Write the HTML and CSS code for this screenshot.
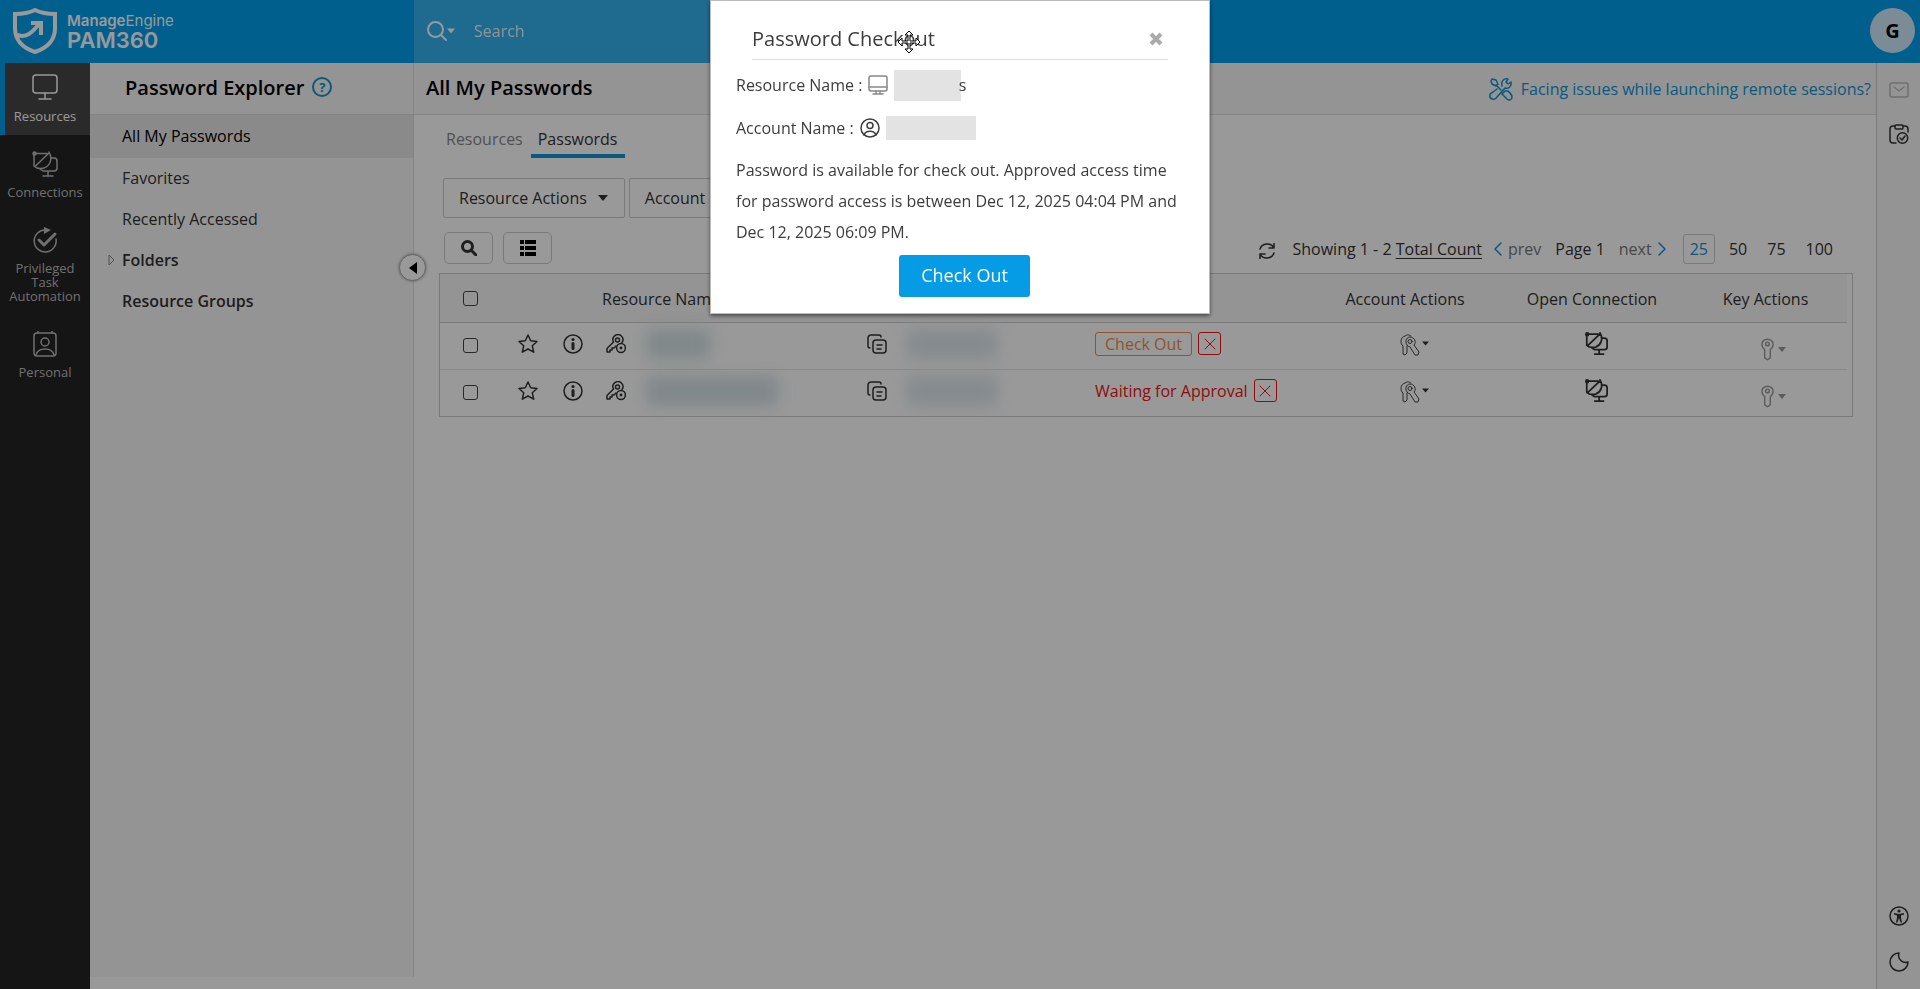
FILE: index.html
```html
<!DOCTYPE html>
<html lang="en">
<head>
    <meta charset="UTF-8">
    <meta name="viewport" content="width=device-width, initial-scale=1.0">
    <title>ManageEngine PAM360</title>
    <link rel="stylesheet" href="styles.css">
</head>
<body>

    <!-- shared icons -->
    <svg class="sprite" aria-hidden="true">
        <symbol id="i-monitor" viewBox="0 0 26 26">
            <rect x="1" y="1" width="24" height="18" rx="3"/>
            <path d="M13 19v5M7 25h12"/>
        </symbol>
        <symbol id="i-connect" viewBox="0 0 26 26">
            <path d="M2 2.500h13M17 1c4 7 1 14-5 16-4 1-8 0-10-2V3M3 15.500L17 2"/>
            <circle cx="2.500" cy="2.500" r="1.500" fill="currentColor"/>
            <path d="M19 7h3a3 3 0 0 1 3 3v7a3 3 0 0 1-3 3H11l-3-2M16 20v4M11 25h10"/>
        </symbol>
        <symbol id="i-task" viewBox="0 0 26 26">
            <path d="M14 3a11 11 0 1 0 10 9"/>
            <path d="M12 0l7 3-7 4z" fill="currentColor" stroke="none"/>
            <path d="M7 13l5 5L23 7" stroke-width="3"/>
        </symbol>
        <symbol id="i-personal" viewBox="0 0 26 26">
            <rect x="2" y="2" width="22" height="23" rx="3"/>
            <circle cx="13" cy="11" r="4"/>
            <path d="M4 24c2-8 16-8 18 0M6 0v2M20 0v2"/>
        </symbol>
        <symbol id="i-star" viewBox="0 0 20 20">
            <path d="M10 1l2.700 5.800 6.300.7-4.700 4.300 1.400 6.400L10 15l-5.700 3.200 1.400-6.400L1 7.500l6.300-.7z"/>
        </symbol>
        <symbol id="i-info" viewBox="0 0 20 20">
            <circle cx="10" cy="10" r="9"/>
            <path d="M10 9.500v5" stroke-width="3"/>
            <circle cx="10" cy="5.500" r="1.600" fill="currentColor" stroke="none"/>
        </symbol>
        <symbol id="i-keyview" viewBox="0 0 20 20">
            <path d="M16 8.500a5 5 0 1 0-8.500-.5L1 14.500V18h3v-2h2v-2h2l2-2"/>
            <circle cx="11.500" cy="6" r="2"/>
            <circle cx="15" cy="14" r="4.400"/>
            <circle cx="15" cy="14" r=".7" fill="currentColor"/>
        </symbol>
        <symbol id="i-copy" viewBox="0 0 20 20">
            <rect x="6" y="6" width="13" height="13" rx="3"/>
            <path d="M3 14a2 2 0 0 1-2-2V4a3 3 0 0 1 3-3h8a2 2 0 0 1 2 2M10 11h5M10 15h4"/>
        </symbol>
        <symbol id="i-keys" viewBox="0 0 22 22">
            <path d="M5 2C0 3 0 10 3 12v8l2 1 2-2v-7M5 2c2-2 5-1 6 0"/>
            <path d="M8 12C4 9 6 3 10 3s7 5 4 8l5 7-1 3h-3l-5-8z"/>
            <circle cx="10" cy="7.500" r="2"/>
        </symbol>
        <symbol id="i-key" viewBox="0 0 14 24">
            <path d="M4 12C1 10 1 8 1 6a6 5 0 0 1 12 0c0 2 0 4-3 6v9l-3 2-3-2z"/>
            <circle cx="7" cy="6" r="2"/>
        </symbol>
        <symbol id="i-cross" viewBox="0 0 12 12">
            <path d="M1 1l10 10M11 1L1 11"/>
        </symbol>
        <symbol id="i-caret" viewBox="0 0 10 6">
            <path d="M0 0h10L5 6z" fill="currentColor" stroke="none"/>
        </symbol>
    </svg>

    <header class="topbar">
        <a class="brand" href="#">
            <svg class="shield" viewBox="0 0 44 46">
                <path d="M22 2C16 5 9 6 2 6v14c0 12 8 20 20 24 12-4 20-12 20-24V6C35 6 28 5 22 2z"/>
                <path d="M4 27c9 3 14-1 23-12M18 15h10v12" />
            </svg>
            <span class="brand-text">
                <span class="brand-company"><b>Manage</b>Engine</span>
                <span class="brand-product">PAM360</span>
            </span>
        </a>
        <div class="search">
            <button class="search-type" aria-label="Search type">
                <svg class="icon" width="20" height="20" viewBox="0 0 20 20"><circle cx="8.500" cy="8.500" r="7.500"/><path d="M14 14l5 5"/></svg>
                <svg class="caret" width="8" height="6"><use href="#i-caret"/></svg>
            </button>
            <input type="text" placeholder="Search" aria-label="Search">
        </div>
        <button class="avatar">G</button>
    </header>

    <div class="layout">
        <nav class="nav">
            <a class="nav-item active" href="#"><svg class="icon"><use href="#i-monitor"/></svg>Resources</a>
            <a class="nav-item" href="#"><svg class="icon"><use href="#i-connect"/></svg>Connections</a>
            <a class="nav-item" href="#"><svg class="icon"><use href="#i-task"/></svg>Privileged Task Automation</a>
            <a class="nav-item" href="#"><svg class="icon"><use href="#i-personal"/></svg>Personal</a>
        </nav>

        <aside class="explorer">
            <div class="explorer-title">
                <h2>Password Explorer</h2>
                <a class="help" href="#" aria-label="Help">?</a>
            </div>
            <ul>
                <li><a class="selected" href="#">All My Passwords</a></li>
                <li><a href="#">Favorites</a></li>
                <li><a href="#">Recently Accessed</a></li>
                <li><a class="group" href="#"><svg class="expand" width="7" height="12" viewBox="0 0 7 12"><path d="M1 1l5 5-5 5z"/></svg>Folders</a></li>
                <li><a class="group" href="#">Resource Groups</a></li>
            </ul>
            <button class="collapse" aria-label="Collapse"><svg width="8" height="12" viewBox="0 0 8 12"><path d="M8 0v12L0 6z"/></svg></button>
        </aside>

        <main class="main">
            <div class="page-head">
                <h2>All My Passwords</h2>
                <a class="issues" href="#">
                    <svg class="icon" width="24" height="24" viewBox="0 0 24 24"><path d="M7 8l5 5M3 2l4 1 2 4-2 2-4-2-1-3zM13 9c-1-4 1-8 6-7l-2 3 2 2 3-2c1 5-3 7-6 6L8 20c-2 4-8 2-7-2 0-2 2-2 3-3l4-3M16 14c4-1 7 4 7 6 0 3-3 4-5 2l-5-5z"/></svg>
                    Facing issues while launching remote sessions?
                </a>
            </div>

            <div class="content">
                <div class="tabs">
                    <a href="#">Resources</a>
                    <a class="current" href="#">Passwords</a>
                </div>

                <div class="actions">
                    <button>Resource Actions <svg width="10" height="6"><use href="#i-caret"/></svg></button>
                    <button>Account <svg width="10" height="6"><use href="#i-caret"/></svg></button>
                </div>

                <div class="tools">
                    <button class="tool" aria-label="Find"><svg class="icon" width="16" height="16" viewBox="0 0 16 16"><circle cx="6.500" cy="6.500" r="5"/><path d="M10 10l5 5"/></svg></button>
                    <button class="tool" aria-label="Columns"><svg width="16" height="16" viewBox="0 0 16 16"><path d="M0 0h4v4H0zM5 0h11v4H5zM0 6h4v4H0zM5 6h11v4H5zM0 12h4v4H0zM5 12h11v4H5z"/></svg></button>
                    <div class="pager">
                        <button class="refresh" aria-label="Refresh"><svg class="icon" width="18" height="16" viewBox="0 0 18 16"><path d="M2 6c2-6 11-7 14-1M16 0v5h-5M16 10c-2 6-11 7-14 1M2 16v-5h5"/></svg></button>
                        <span>Showing 1 - 2 <a class="total" href="#">Total Count</a></span>
                        <a class="step prev" href="#"><svg class="icon" width="8" height="14" viewBox="0 0 8 14"><path d="M7 1L1 7l6 6"/></svg>prev</a>
                        <span class="page">Page 1</span>
                        <a class="step next" href="#">next<svg class="icon" width="8" height="14" viewBox="0 0 8 14"><path d="M1 1l6 6-6 6"/></svg></a>
                        <a class="size current" href="#">25</a>
                        <a class="size" href="#">50</a>
                        <a class="size" href="#">75</a>
                        <a class="size" href="#">100</a>
                    </div>
                </div>

                <div class="grid">
                    <table>
                        <colgroup>
                            <col class="c-check"><col class="c-star"><col class="c-info"><col>
                            <col class="c-account"><col class="c-status"><col class="c-actions"><col class="c-open"><col class="c-key">
                        </colgroup>
                        <thead>
                            <tr>
                                <th class="mid"><input type="checkbox" aria-label="Select all"></th>
                                <th></th>
                                <th></th>
                                <th>Resource Name</th>
                                <th>User Account</th>
                                <th>Password</th>
                                <th class="mid">Account Actions</th>
                                <th class="mid">Open Connection</th>
                                <th class="mid">Key Actions</th>
                            </tr>
                        </thead>
                        <tbody>
                            <tr>
                                <td class="mid pick"><input type="checkbox" aria-label="Select row 1"></td>
                                <td class="mid"><svg class="icon"><use href="#i-star"/></svg></td>
                                <td class="mid"><svg class="icon"><use href="#i-info"/></svg></td>
                                <td><div class="cell name"><svg class="icon"><use href="#i-keyview"/></svg><span class="smudge teal"></span></div></td>
                                <td><div class="cell"><svg class="icon"><use href="#i-copy"/></svg><span class="smudge"></span></div></td>
                                <td><div class="status"><button class="checkout">Check Out</button><button class="deny" aria-label="Cancel"><svg class="icon"><use href="#i-cross"/></svg></button></div></td>
                                <td class="mid"><button class="drop dark" aria-label="Account actions"><svg class="icon keys"><use href="#i-keys"/></svg><svg class="caret" width="7" height="5"><use href="#i-caret"/></svg></button></td>
                                <td class="mid connect"><svg class="icon open"><use href="#i-connect"/></svg></td>
                                <td class="mid"><button class="drop faded" aria-label="Key actions"><svg class="icon key"><use href="#i-key"/></svg><svg class="caret" width="8" height="5"><use href="#i-caret"/></svg></button></td>
                            </tr>
                            <tr>
                                <td class="mid pick"><input type="checkbox" aria-label="Select row 2"></td>
                                <td class="mid"><svg class="icon"><use href="#i-star"/></svg></td>
                                <td class="mid"><svg class="icon"><use href="#i-info"/></svg></td>
                                <td><div class="cell name"><svg class="icon"><use href="#i-keyview"/></svg><span class="smudge wide"></span></div></td>
                                <td><div class="cell"><svg class="icon"><use href="#i-copy"/></svg><span class="smudge"></span></div></td>
                                <td><div class="status"><span class="waiting">Waiting for Approval</span><button class="deny" aria-label="Cancel"><svg class="icon"><use href="#i-cross"/></svg></button></div></td>
                                <td class="mid"><button class="drop dark" aria-label="Account actions"><svg class="icon keys"><use href="#i-keys"/></svg><svg class="caret" width="7" height="5"><use href="#i-caret"/></svg></button></td>
                                <td class="mid connect"><svg class="icon open"><use href="#i-connect"/></svg></td>
                                <td class="mid"><button class="drop faded" aria-label="Key actions"><svg class="icon key"><use href="#i-key"/></svg><svg class="caret" width="8" height="5"><use href="#i-caret"/></svg></button></td>
                            </tr>
                        </tbody>
                    </table>
                </div>
            </div>
        </main>

        <div class="rail">
            <button class="mail" aria-label="Messages"><svg class="icon" width="20" height="16" viewBox="0 0 20 16"><rect x="1" y="1" width="18" height="14" rx="2"/><path d="M5 5l5 4 5-4"/></svg></button>
            <button aria-label="Requests"><svg class="icon" width="20" height="20" viewBox="0 0 20 20"><path d="M7 19H4a3 3 0 0 1-3-3V5a3 3 0 0 1 3-3h2M14 2h2a3 3 0 0 1 3 3v3"/><rect x="6" y="1" width="8" height="4" rx="1"/><circle cx="13.500" cy="14" r="5.200"/><path d="M11 14l2 2 3-4"/></svg></button>
            <button class="bottom" aria-label="Accessibility"><svg class="icon" width="20" height="20" viewBox="0 0 20 20"><circle cx="10" cy="10" r="9"/><circle cx="10" cy="5" r="1.600" fill="currentColor" stroke="none"/><path d="M5 7l5 1 5-1v1.500l-3 1v2l1 5h-1.500L10 12l-1.500 4.500H7l1-5v-2l-3-1z" fill="currentColor" stroke="none"/></svg></button>
            <button aria-label="Dark mode"><svg class="icon" width="20" height="20" viewBox="0 0 20 20"><path d="M10 1a9 9 0 1 0 9 9c-5 2-11-3-9-9z"/></svg></button>
        </div>
    </div>

    <div class="overlay">
        <div class="modal" role="dialog" aria-labelledby="modal-title">
            <div class="modal-head">
                <h3 id="modal-title">Password Checkout</h3>
                <svg class="move" width="24" height="24" viewBox="0 0 24 24"><path d="M12 1l4 4h-3v6h6V8l4 4-4 4v-3h-6v6h3l-4 4-4-4h3v-6H5v3l-4-4 4-4v3h6V5H8z"/></svg>
                <button class="close" aria-label="Close"><svg width="16" height="16" viewBox="0 0 16 16"><path d="M3 3l10 10M13 3L3 13"/></svg></button>
            </div>
            <div class="modal-body">
                <div class="field resource">
                    <span>Resource Name :</span>
                    <svg class="icon" width="20" height="20" viewBox="0 0 20 20"><rect x="1" y="1" width="18" height="15" rx="2"/><path d="M1 12h18M8 16v3M12 16v3M5 19h10"/></svg>
                    <span class="mask">s</span>
                </div>
                <div class="field account">
                    <span>Account Name :</span>
                    <svg class="icon" width="20" height="20" viewBox="0 0 20 20"><circle cx="10" cy="10" r="9"/><circle cx="10" cy="7.500" r="3"/><path d="M4 17c2-5 10-5 12 0"/></svg>
                    <span class="mask"></span>
                </div>
                <p>Password is available for check out. Approved access time for password access is between Dec 12, 2025 04:04 PM and Dec 12, 2025 06:09 PM.</p>
                <button class="primary">Check Out</button>
            </div>
        </div>
    </div>

</body>
</html>
```
FILE: styles.css
```css
* {
    box-sizing: border-box;
}

body {
    margin: 0;
    min-height: 100vh;
    display: flex;
    flex-direction: column;
    font-family: "Open Sans", sans-serif;
    font-size: 16px;
    color: #333;
    background: #fff;
}

a {
    color: inherit;
    text-decoration: none;
}

button {
    font: inherit;
    color: inherit;
    background: none;
    border: 0;
    padding: 0;
    cursor: pointer;
}

h2,
h3 {
    margin: 0;
}

h2 {
    font-size: 20px;
    font-weight: 600;
    color: #000;
}

svg {
    display: block;
    flex: none;
}

.sprite {
    position: absolute;
    width: 0;
    height: 0;
}

.icon {
    fill: none;
    stroke: currentColor;
    stroke-width: 1.5;
    stroke-linejoin: round;
    stroke-linecap: round;
}

/* top bar */

.topbar {
    display: flex;
    align-items: center;
    height: 63px;
    background: #009eec;
}

.brand {
    display: flex;
    align-items: center;
    gap: 10px;
    width: 414px;
    padding: 0 0 2px 13px;
    color: #fff;
}

.shield {
    width: 44px;
    height: 46px;
    fill: none;
    stroke: #fff;
    stroke-width: 4;
}

.brand-text {
    display: flex;
    flex-direction: column;
    font-family: Inter, sans-serif;
}

.brand-company {
    font-size: 15px;
    line-height: 19px;
}

.brand-company b {
    font-weight: 600;
}

.brand-product {
    font-size: 22px;
    font-weight: 600;
    line-height: 21px;
}

.search {
    flex: 0 0 40%;
    align-self: stretch;
    display: flex;
    align-items: center;
    gap: 19px;
    padding: 0 0 2px 13px;
    background: #35b2f0;
    color: #fff;
}

.search-type {
    display: flex;
    align-items: center;
}

.search-type .icon {
    stroke-width: 2;
}

.search input {
    flex: 1;
    padding: 0;
    border: 0;
    background: none;
    font: inherit;
    color: #fff;
}

.search input::placeholder {
    color: #fff;
    opacity: 0.9;
}

.avatar {
    width: 45px;
    height: 45px;
    margin: 0 5px 2px auto;
    border-radius: 50%;
    background: #cfeafa;
    color: #000;
    font-size: 20px;
    font-weight: 700;
}

.layout {
    flex: 1;
    display: flex;
}

/* left navigation */

.nav {
    width: 90px;
    background: #232323;
}

.nav-item {
    display: flex;
    flex-direction: column;
    align-items: center;
    gap: 8px;
    padding: 16px 5px 12px;
    font-size: 13px;
    line-height: 14px;
    text-align: center;
    color: #bbb;
}

.nav-item .icon {
    width: 26px;
    height: 26px;
}

.nav-item.active {
    gap: 9px;
    padding: 11px 5px 12px 0;
    border-left: 5px solid #009eec;
    background: #464646;
    color: #fff;
}

/* password explorer */

.explorer {
    position: relative;
    width: 324px;
    margin-bottom: 12px;
    border-right: 1px solid #ddd;
    background: #f7f7f7;
}

.explorer-title {
    display: flex;
    align-items: center;
    gap: 8px;
    height: 52px;
    padding: 0 0 2px 35px;
    border-bottom: 1px solid #ddd;
}

.help {
    width: 20px;
    height: 20px;
    margin-bottom: 2px;
    border: 2px solid #0f94d2;
    border-radius: 50%;
    font-size: 13px;
    font-weight: 700;
    line-height: 16px;
    text-align: center;
    color: #0f94d2;
}

.explorer ul {
    margin: 0;
    padding: 0;
    list-style: none;
}

.explorer li a {
    display: flex;
    align-items: center;
    height: 41px;
    padding: 0 0 2px 32px;
}

.explorer li .selected {
    height: 43px;
    background: #e6e6e6;
    color: #000;
}

.explorer li .group {
    font-weight: 600;
}

.expand {
    margin: 0 7px 0 -14px;
    fill: none;
    stroke: #888;
}

.collapse {
    position: absolute;
    top: 191px;
    right: -13px;
    display: flex;
    align-items: center;
    justify-content: center;
    width: 27px;
    height: 27px;
    border: 1px solid #aaa;
    border-radius: 50%;
    background: #fff;
    box-shadow: 0 0 3px #999;
}

/* main area */

.main {
    flex: 1;
    min-width: 0;
}

.page-head {
    display: flex;
    align-items: center;
    justify-content: space-between;
    height: 52px;
    padding: 0 5px 2px 12px;
    border-bottom: 1px solid #ddd;
    background: #f7f7f7;
}

.issues {
    display: flex;
    align-items: center;
    gap: 8px;
    padding-top: 3px;
    color: #0f94d2;
}

.content {
    padding: 0 23px 0 25px;
}

.tabs {
    display: flex;
    margin-bottom: 20px;
    color: #888;
}

.tabs a {
    padding: 13px 8px 4px 7px;
    border-bottom: 4px solid transparent;
}

.tabs .current {
    border-color: #0f94d2;
    color: #333;
}

.actions {
    display: flex;
    gap: 4px;
    margin: 0 4px 14px;
}

.actions button {
    display: flex;
    align-items: center;
    gap: 11px;
    height: 40px;
    padding: 0 16px 0 15px;
    border: 1px solid #ccc;
    border-radius: 2px;
}

.tools {
    display: flex;
    align-items: center;
    gap: 10px;
    margin-bottom: 9px;
    padding: 0 10px 0 5px;
}

.tool {
    display: flex;
    align-items: center;
    justify-content: center;
    width: 49px;
    height: 32px;
    border: 1px solid #ccc;
    border-radius: 5px;
}

.tool .icon {
    stroke-width: 3;
}

.pager {
    display: flex;
    align-items: center;
    margin-left: auto;
    padding-top: 2px;
}

.refresh {
    margin: 4px 16px 0 0;
}

.total {
    text-decoration: underline;
    text-underline-offset: 3px;
}

.step {
    display: flex;
    align-items: center;
    gap: 6px;
    color: #777;
}

.step .icon {
    color: #0f94d2;
}

.prev {
    margin: 0 14px 0 12px;
}

.next {
    margin: 0 17px 0 14px;
}

.size {
    padding: 3px 10px;
}

.size.current {
    padding: 3px 6px;
    margin-right: 4px;
    border: 1px solid #ccc;
    border-radius: 3px;
    color: #0f94d2;
}

/* passwords table */

.grid {
    padding-right: 5px;
    border: 1px solid #ccc;
}

table {
    width: 100%;
    table-layout: fixed;
    border-collapse: collapse;
}

.c-check { width: 60px; }
.c-star { width: 56px; }
.c-info { width: 34px; }
.c-account { width: 228px; }
.c-status { width: 227px; }
.c-actions { width: 190px; }
.c-open { width: 184px; }
.c-key { width: 163px; }

th,
td {
    height: 47px;
    padding: 0 0 4px 12px;
    text-align: left;
    font-weight: 400;
    border-bottom: 1px solid #e4e4e4;
}

th {
    height: 48px;
    padding: 2px 0 0 12px;
    background: #f7f7f7;
    border-color: #ccc;
}

tbody tr:last-child td {
    border-bottom: 0;
}

.mid {
    padding-left: 0;
    text-align: center;
}

.pick {
    padding-bottom: 0;
}

.connect {
    padding-left: 8px;
}

td .icon {
    width: 20px;
    height: 20px;
    margin: 0 auto;
}

td .open {
    width: 23px;
    height: 23px;
    stroke-width: 2;
}

input[type="checkbox"] {
    appearance: none;
    display: block;
    width: 15px;
    height: 15px;
    margin: 0 auto;
    border: 1px solid #444;
    border-radius: 3px;
}

.cell {
    display: flex;
    align-items: center;
    gap: 20px;
}

.cell .icon {
    margin: 0;
}

.name {
    padding-left: 4px;
}

/* hidden names */
.smudge {
    width: 90px;
    height: 30px;
    background: #dde7ed;
    filter: blur(8px);
}

.smudge.teal {
    width: 64px;
    background: #d5e3e6;
}

.smudge.wide {
    width: 132px;
    background: #d5e1e8;
}

.status {
    display: flex;
    align-items: center;
    gap: 6px;
}

.checkout {
    padding: 0 9px;
    border: 1px solid #f08c46;
    border-radius: 3px;
    line-height: 22px;
    color: #f08c46;
}

.waiting {
    color: #f01414;
}

.deny {
    width: 23px;
    height: 23px;
    border: 1px solid #f01414;
    border-radius: 3px;
    color: #f01414;
}

.deny .icon {
    width: 12px;
    height: 12px;
    stroke-width: 1;
}

.drop {
    display: inline-flex;
    align-items: center;
    vertical-align: middle;
}

.drop .keys {
    width: 22px;
    height: 22px;
    margin: 3px 0 0 18px;
    color: #444;
    stroke-width: 1;
}

.drop .key {
    width: 13px;
    height: 23px;
}

.drop.faded {
    gap: 4px;
    padding: 12px 0 0 16px;
    color: #999;
}

/* right rail */

.rail {
    display: flex;
    flex-direction: column;
    align-items: center;
    gap: 26px;
    width: 44px;
    padding: 19px 0 17px;
    border-left: 1px solid #ccc;
    background: #f7f7f7;
}

.mail {
    color: #bbb;
}

.rail .bottom {
    margin-top: auto;
}

/* checkout dialog */

.overlay {
    position: fixed;
    inset: 0;
    display: flex;
    justify-content: center;
    align-items: flex-start;
    background: rgba(0, 0, 0, 0.4);
}

.modal {
    width: 500px;
    padding: 19px 25px 16px;
    border: 1px solid #bbb;
    background: #fff;
    box-shadow: 0 2px 4px rgba(0, 0, 0, 0.5);
    color: #3d3d3d;
}

.modal-head {
    position: relative;
    display: flex;
    align-items: center;
    justify-content: space-between;
    height: 40px;
    margin: 0 16px;
    padding: 0 4px 2px 0;
    border-bottom: 1px solid #ddd;
}

.modal-head h3 {
    font-size: 20px;
    font-weight: 400;
}

.move {
    position: absolute;
    top: 10px;
    left: 145px;
    fill: #fff;
    stroke: #000;
}

.close svg {
    fill: none;
    stroke: #aaa;
    stroke-width: 4;
}

.modal-body {
    display: flex;
    flex-direction: column;
}

.field {
    display: flex;
    align-items: center;
    gap: 6px;
    height: 43px;
    padding-top: 2px;
}

.resource {
    height: 45px;
    padding-top: 5px;
}

.resource .icon {
    color: #888;
}

.mask {
    width: 90px;
    height: 24px;
    background: #e3e3e3;
}

.resource .mask {
    width: 72px;
    height: 31px;
    line-height: 31px;
    text-align: right;
    background: linear-gradient(to right, #e3e3e3 67px, transparent 67px);
}

.modal p {
    margin: 7px -8px 7px 0;
    line-height: 31px;
}

.primary {
    align-self: center;
    height: 42px;
    margin-left: 9px;
    padding: 0 22px 2px;
    border-radius: 3px;
    background: #059be5;
    color: #fff;
    font-size: 18px;
    font-weight: 500;
}
```
